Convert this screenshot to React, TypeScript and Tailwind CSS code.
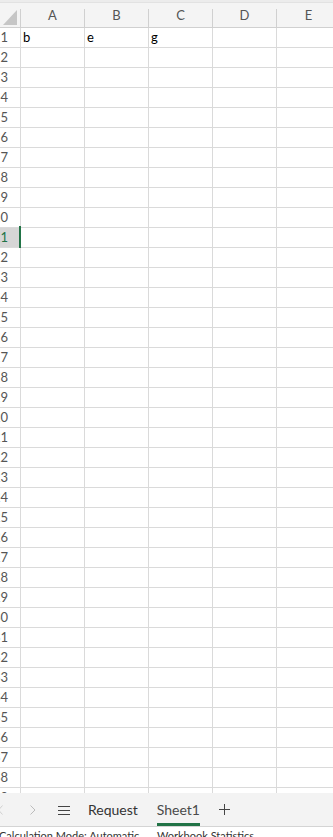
import React from 'react';

const columns = ['A', 'B', 'C', 'D', 'E'];
const rows = Array.from({ length: 39 }, (_, i) => i + 1);
const cellValues: Record<string, string> = { A1: 'b', B1: 'e', C1: 'g' };
const selectedRow = 11;

function HeaderRow() {
  return (
    <div className="flex h-[25px] shrink-0 border-b border-[#d0d0d0] bg-[#f4f4f4]">
      {/* Select-all corner */}
      <div className="flex h-full w-[21px] shrink-0">
        <div className="flex-1">
          <svg width="20" height="24" viewBox="0 0 20 24">
            <polygon points="3,22 17,22 17,7" fill="#c6c6c6" />
          </svg>
        </div>
        <div className="h-[18px] w-px self-end bg-[#d0d0d0]" />
      </div>
      {columns.map((col) => (
        <div key={col} className="flex h-full w-[64px] shrink-0">
          <div className="flex flex-1 items-center justify-center text-[13px] leading-[24px] text-[#555]">
            {col}
          </div>
          <div className="h-[18px] w-px self-end bg-[#d0d0d0]" />
        </div>
      ))}
    </div>
  );
}

function GridRow({ n }: { n: number }) {
  const isSelected = n === selectedRow;
  return (
    <div className="flex h-[20px] shrink-0 border-b border-[#dadada]">
      <div
        className={`relative flex w-[21px] shrink-0 justify-end overflow-hidden border-r border-[#dadada] pr-[12px] text-[13px] leading-[19px] ${
          isSelected ? 'bg-[#d6d6d6] text-[#217346]' : 'bg-white text-[#555]'
        }`}
      >
        <span className="whitespace-nowrap">{n}</span>
      </div>
      {isSelected && (
        <div className="relative w-0">
          <div className="absolute left-[-2px] top-[-2px] h-[22px] w-[2px] bg-[#217346]" />
        </div>
      )}
      {columns.map((col) => (
        <div
          key={col}
          className="w-[64px] shrink-0 border-r border-[#dadada] pl-[2px] text-[13px] leading-[19px] text-black"
        >
          {cellValues[`${col}${n}`] ?? ''}
        </div>
      ))}
    </div>
  );
}

function SheetTabs() {
  return (
    <div className="flex h-[34px] shrink-0 items-center border-b border-[#d4d4d4] bg-[#f3f3f3]">
      <svg className="ml-[-2px] shrink-0" width="6" height="10" viewBox="0 0 6 10">
        <polyline points="4.5,0.5 0.5,5 4.5,9.5" fill="none" stroke="#d0d0d0" strokeWidth="1" />
      </svg>
      <svg className="ml-[26px] shrink-0" width="6" height="10" viewBox="0 0 6 10">
        <polyline points="0.5,0.5 5,5 0.5,9.5" fill="none" stroke="#bcbcbc" strokeWidth="1" />
      </svg>
      <svg className="ml-[22px] shrink-0" width="12" height="10" viewBox="0 0 12 10">
        <line x1="0" y1="1.5" x2="12" y2="1.5" stroke="#444" strokeWidth="1" />
        <line x1="0" y1="5.5" x2="12" y2="5.5" stroke="#444" strokeWidth="1" />
        <line x1="0" y1="9.5" x2="12" y2="9.5" stroke="#444" strokeWidth="1" />
      </svg>
      <span className="ml-[18px] whitespace-nowrap text-[14px] leading-[16px] text-[#333]">Request</span>
      <div className="ml-[19px] flex h-full items-center border-b-[3px] border-[#217346] pt-[3px]">
        <span className="whitespace-nowrap text-[14px] leading-[16px] text-[#4a4a4a]">Sheet1</span>
      </div>
      <svg className="ml-[19px] shrink-0" width="11" height="11" viewBox="0 0 11 11">
        <line x1="5.5" y1="0" x2="5.5" y2="11" stroke="#444" strokeWidth="1" />
        <line x1="0" y1="5.5" x2="11" y2="5.5" stroke="#444" strokeWidth="1" />
      </svg>
    </div>
  );
}

export default function App() {
  return (
    <div
      className="flex h-[837px] w-[333px] flex-col overflow-hidden bg-white"
      style={{ fontFamily: 'Lato, "Noto Sans", sans-serif' }}
    >
      <div className="h-[3px] shrink-0 border-b border-[#e2e2e2] bg-[#ececec]" />
      <HeaderRow />
      <div className="flex flex-1 flex-col overflow-hidden">
        {rows.map((n) => (
          <GridRow key={n} n={n} />
        ))}
      </div>
      <SheetTabs />
      <div className="flex h-[10px] shrink-0 overflow-hidden bg-white pt-[2px] text-[11px] leading-[14px] text-[#333]">
        <span className="ml-[-1px] w-[158px] shrink-0 whitespace-nowrap">Calculation Mode: Automatic</span>
        <span className="whitespace-nowrap">Workbook Statistics</span>
      </div>
    </div>
  );
}
